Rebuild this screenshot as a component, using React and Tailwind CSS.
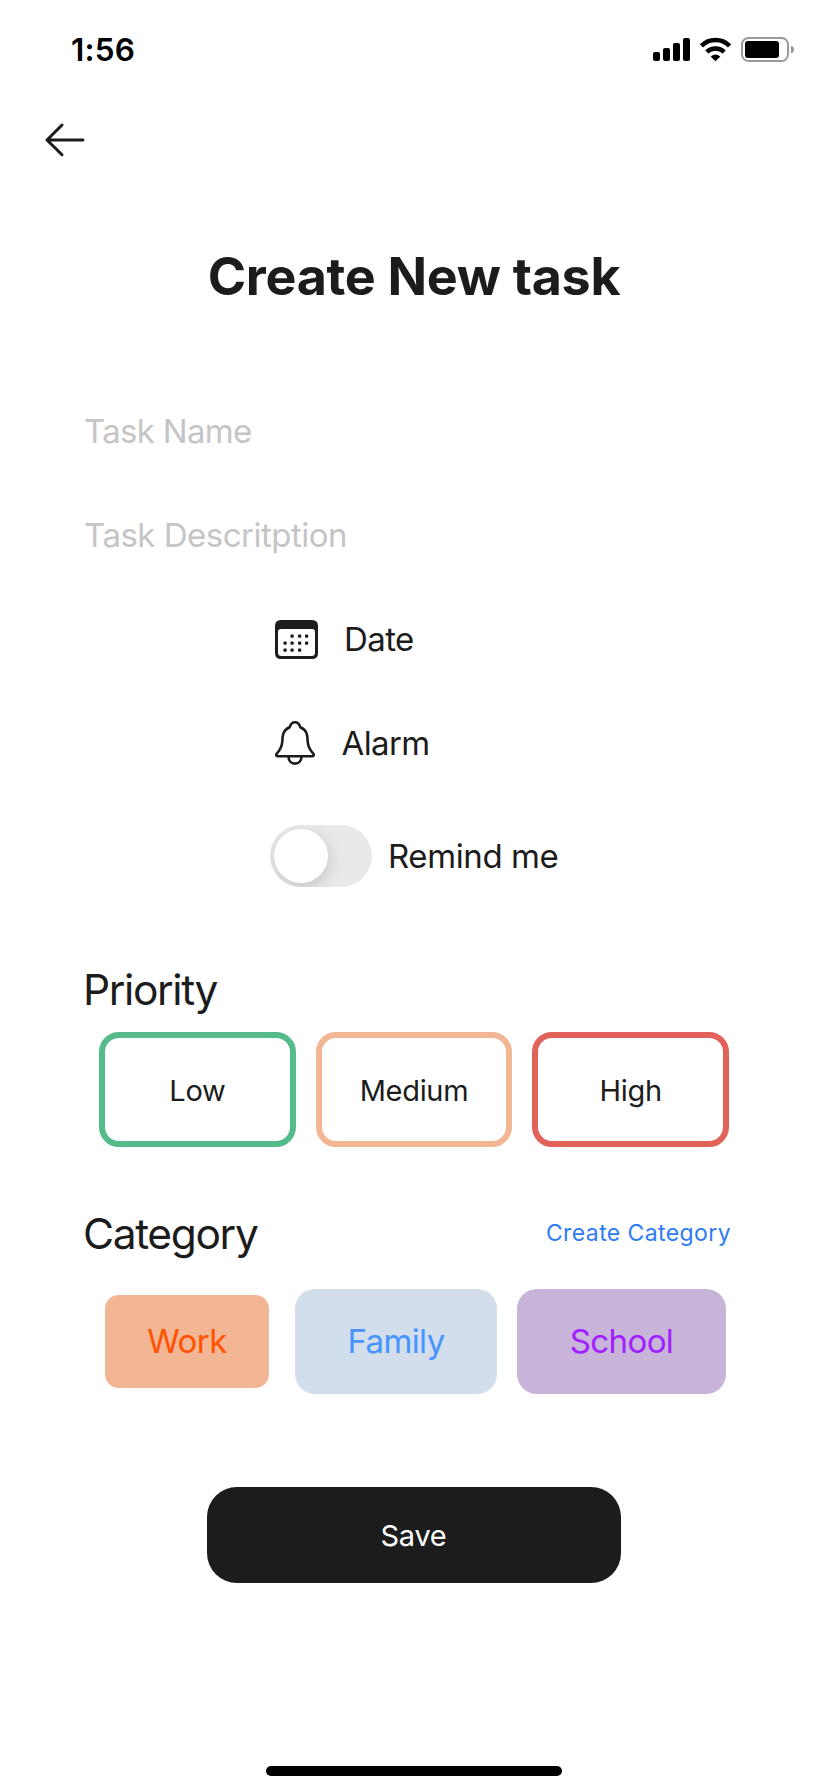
const priorities = [
  { label: 'Low', style: 'border-[#55bb8a]' },
  { label: 'Medium', style: 'border-[#f2b694]' },
  { label: 'High', style: 'border-[#e16259]' },
];

function StatusBar() {
  return (
    <div className="flex h-[100px] items-center justify-between pl-[71px] pr-[33px] text-black">
      <span className="text-[31.500px] font-semibold leading-none tracking-[0.2px]">1:56</span>
      <svg className="h-[30px] w-[144px]" viewBox="651 35 144 30">
        <rect x="653" y="52" width="7" height="9" rx="2" />
        <rect x="663" y="48" width="7" height="13" rx="2" />
        <rect x="673" y="43" width="7" height="18" rx="2" />
        <rect x="683" y="38" width="7" height="23" rx="2" />
        <path d="M701.4 45.8A20 20 0 0 1 729.6 45.8" fill="none" stroke="black" strokeWidth="4.6" />
        <path d="M706.8 52A12.5 12.5 0 0 1 724.2 52" fill="none" stroke="black" strokeWidth="4.4" />
        <path d="M715.5 61.2L710.7 56.4Q715.5 52.4 720.3 56.4Z" />
        <rect x="742" y="38" width="46" height="23" rx="6.5" fill="none" stroke="#999" strokeWidth="2" />
        <rect x="745" y="41" width="34" height="17" rx="3" />
        <path d="M791 45.5Q794 46.5 794 49.5T791 53.5Z" fill="#999" />
      </svg>
    </div>
  );
}

function CalendarIcon() {
  const dots = [[17, 16], [24.5, 16], [31.5, 16], [10, 23], [17, 23], [24.5, 23], [31.5, 23], [10, 30], [17, 30], [24.5, 30]];
  return (
    <svg className="h-[39px] w-[43px]" viewBox="0 0 43 39" fill="#1c1c1c">
      <path fillRule="evenodd" d="M6 0H37Q43 0 43 6V33Q43 39 37 39H6Q0 39 0 33V6Q0 0 6 0ZM6 9Q3 9 3 12V32.500Q3 36 6.500 36H36.500Q40 36 40 32.500V12Q40 9 37 9Z" />
      {dots.map(([x, y]) => (
        <rect key={`${x}-${y}`} x={x - 1.5} y={y - 1.5} width="3.2" height="3.2" rx="0.8" />
      ))}
    </svg>
  );
}

function BellIcon() {
  return (
    <svg className="h-[44px] w-[40px]" viewBox="0 0 40 44" fill="none" stroke="#1c1c1c" strokeWidth="2.6" strokeLinejoin="round">
      <path d="M2.500 35.200H37.500C38.800 35.200 39.200 33.800 38.200 32.600C34.500 28.600 33 26 32.700 20.500C32.400 13 31.500 8.700 25.300 6.200C24.300 2.900 22.600 1.300 20 1.300S15.700 2.900 14.700 6.200C8.500 8.700 7.600 13 7.300 20.500C7 26 5.500 28.600 1.800 32.600C.8 33.800 1.200 35.200 2.500 35.200Z" />
      <path d="M13.500 35.500C13.500 39.700 16.200 42.600 20 42.600S26.500 39.700 26.500 35.500" />
    </svg>
  );
}

export default function App() {
  return (
    <div className="flex h-[1792px] w-[828px] flex-col bg-white font-['Inter',sans-serif] text-[#1c1c1c]">
      <StatusBar />
      <header className="flex h-20 items-center pl-[44px]">
        <button aria-label="Back">
          <svg className="h-9 w-[42px]" viewBox="0 0 42 36" fill="none" stroke="#1c1c1c" strokeWidth="3" strokeLinecap="round" strokeLinejoin="round">
            <path d="M39 18H3M18 3L3 18L18 32.800" />
          </svg>
        </button>
      </header>
      <h1 className="mt-[61px] h-[72px] text-center text-[52px] font-bold leading-[72px] tracking-[-0.3px]">Create New task</h1>
      <main className="mt-[66px] flex flex-col text-[33px]">
        <input className="ml-[84px] h-[104px] w-[640px] tracking-[-0.7px] placeholder:text-[#c5c5c7]" placeholder="Task Name" />
        <input className="ml-[84px] h-[104px] w-[640px] tracking-[-0.5px] placeholder:text-[#c5c5c7]" placeholder="Task Descritption" />
        <div className="ml-[275px] flex h-[104px] items-center gap-[26px]">
          <CalendarIcon />
          <span className="pt-px tracking-[-0.6px]">Date</span>
        </div>
        <div className="ml-[275px] flex h-[104px] items-center gap-[26.500px]">
          <BellIcon />
          <span className="pt-px tracking-[-0.6px]">Alarm</span>
        </div>
        <div className="ml-[270px] flex h-[122px] items-center gap-4">
          <button role="switch" aria-checked="false" aria-label="Remind me" className="flex h-[62px] w-[102px] items-center overflow-hidden rounded-full bg-[#e9e9e9] px-1">
            <span className="size-[54px] rounded-full bg-white shadow-[1px_5px_16px_rgba(0,0,0,0.15)]" />
          </button>
          <span className="pt-px tracking-[-0.4px]">Remind me</span>
        </div>

        <h2 className="ml-[83px] mt-10 h-[66px] text-[42.500px] leading-[66px] tracking-[-1.4px]">Priority</h2>
        <div className="ml-[99px] mt-[9px] flex w-[630px] gap-5">
          {priorities.map(({ label, style }) => (
            <button key={label} className={`h-[115px] flex-1 rounded-[20px] border-[6px] pt-0.5 text-[29px] tracking-[-0.3px] ${style}`}>
              {label}
            </button>
          ))}
        </div>

        <div className="ml-[83px] mr-[97px] mt-[53px] flex h-[67px] items-center justify-between">
          <h2 className="text-[42.500px] tracking-[-1.35px]">Category</h2>
          <button className="text-[23px] tracking-[0.4px] text-[#2f7bf6]">Create Category</button>
        </div>
        <div className="ml-[105px] mt-[22px] flex items-center tracking-[-0.6px]">
          <button className="h-[93px] w-[164px] rounded-[14px] bg-[#f2b694] text-[#ff5200]">Work</button>
          <button className="ml-[26px] h-[105px] w-[202px] rounded-[20px] bg-[#d3deec] text-[#4594ff]">Family</button>
          <button className="ml-5 h-[105px] w-[209px] rounded-[20px] bg-[#c8b4d8] text-[#a020ff]">School</button>
        </div>
        <button className="mt-[93px] h-24 w-[414px] self-center rounded-[30px] bg-[#1c1c1c] pr-px pt-px text-[29px] tracking-[-0.3px] text-white">Save</button>
      </main>
      <div className="mb-4 mt-auto h-2.5 w-[296px] self-center rounded-full bg-black" />
    </div>
  );
}
